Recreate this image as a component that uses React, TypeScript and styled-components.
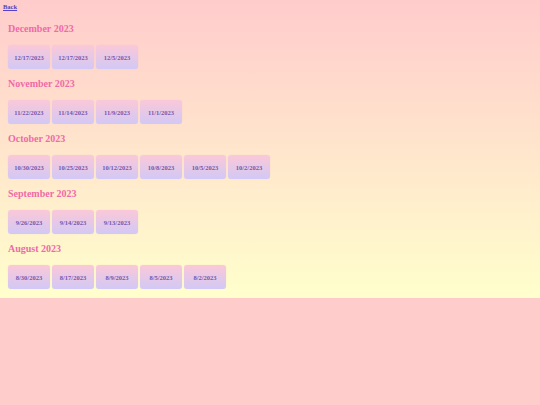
import styled, { createGlobalStyle } from "styled-components"

const GlobalStyle = createGlobalStyle`
    html, body {
        margin: 0;
        padding: 0;
        background: #ffcccc;
        font-family: "Liberation Serif", "Times New Roman", serif;
    }
`

interface Month {
    title: string
    dates: string[]
}

const months: Month[] = [
    { title: "December 2023", dates: ["12/17/2023", "12/17/2023", "12/5/2023"] },
    { title: "November 2023", dates: ["11/22/2023", "11/14/2023", "11/9/2023", "11/1/2023"] },
    { title: "October 2023", dates: ["10/30/2023", "10/25/2023", "10/12/2023", "10/8/2023", "10/5/2023", "10/2/2023"] },
    { title: "September 2023", dates: ["9/26/2023", "9/14/2023", "9/13/2023"] },
    { title: "August 2023", dates: ["8/30/2023", "8/17/2023", "8/9/2023", "8/5/2023", "8/2/2023"] },
]

export default function App() {
    return (
        <>
            <GlobalStyle />
            <Page>
                <BackLink href="#">Back</BackLink>
                <Sections>
                    {months.map((month) => (
                        <Section key={month.title}>
                            <MonthTitle>{month.title}</MonthTitle>
                            <DateRow>
                                {month.dates.map((date, i) => (
                                    <DateButton key={date + i}>{date}</DateButton>
                                ))}
                            </DateRow>
                        </Section>
                    ))}
                </Sections>
            </Page>
        </>
    )
}

const Page = styled.div`
    display: flex;
    flex-direction: column;
    align-items: flex-start;
    background: linear-gradient(to bottom, #ffcccc, #ffffcc);
    padding: 3px 3px 9px 3px;
`

const BackLink = styled.a`
    display: block;
    font-size: 6.5px;
    line-height: 8px;
    font-weight: bold;
    color: #5b3fc4;
    text-decoration: underline;
`

const Sections = styled.div`
    display: flex;
    flex-direction: column;
    padding: 0 5px;
`

const Section = styled.section`
    display: flex;
    flex-direction: column;
    padding-top: 12px;
    &:not(:first-child) {
        padding-top: 9px;
    }
`

const MonthTitle = styled.h2`
    margin: 0 0 10px 0;
    font-size: 10px;
    line-height: 12px;
    font-weight: bold;
    color: #f06aa8;
`

const DateRow = styled.div`
    display: flex;
    gap: 2px;
`

const DateButton = styled.button`
    width: 42px;
    height: 24px;
    padding: 0;
    border: none;
    border-radius: 3px;
    background: linear-gradient(to bottom, #fbc8d8, #d2c8f6);
    box-shadow: 0 0 1px rgba(180, 160, 220, 0.4);
    font-family: "Liberation Serif", "Times New Roman", serif;
    font-size: 6.5px;
    font-weight: bold;
    color: #7656aa;
    cursor: pointer;
`
